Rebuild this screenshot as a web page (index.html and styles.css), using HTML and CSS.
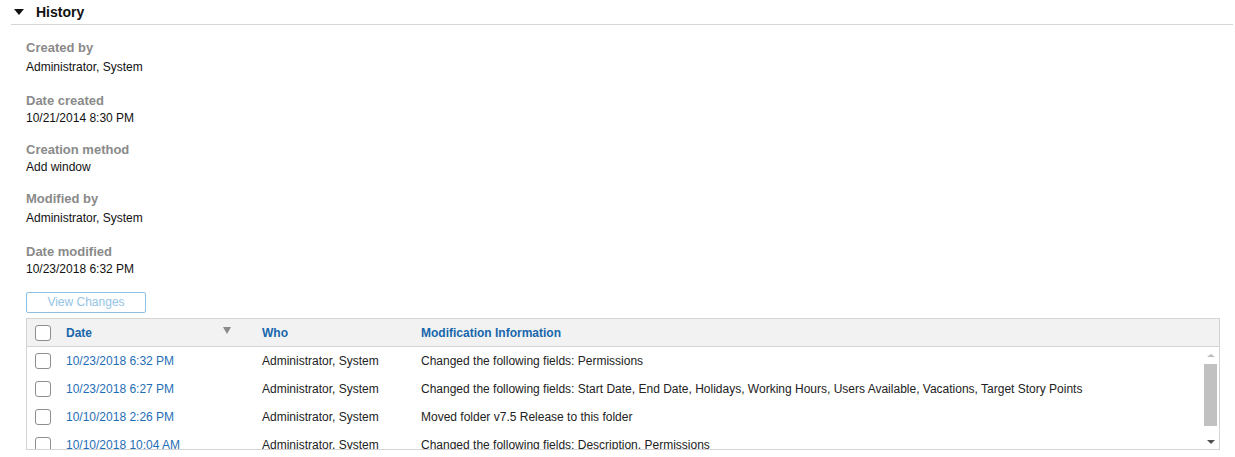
FILE: index.html
```html
<!DOCTYPE html>
<html lang="en">
<head>
<meta charset="utf-8">
<title>History</title>
<link rel="stylesheet" href="styles.css">
</head>
<body>
<section class="history">
  <header class="section-head">
    <span class="caret"></span>
    <h2 class="section-title">History</h2>
  </header>
  <div class="section-body">
    <dl class="fields">
      <div class="field field-tall">
        <dt class="label">Created by</dt>
        <dd class="value">Administrator, System</dd>
      </div>
      <div class="field">
        <dt class="label">Date created</dt>
        <dd class="value">10/21/2014 8:30 PM</dd>
      </div>
      <div class="field">
        <dt class="label">Creation method</dt>
        <dd class="value">Add window</dd>
      </div>
      <div class="field field-tall">
        <dt class="label">Modified by</dt>
        <dd class="value">Administrator, System</dd>
      </div>
      <div class="field">
        <dt class="label">Date modified</dt>
        <dd class="value">10/23/2018 6:32 PM</dd>
      </div>
    </dl>
    <button class="btn" type="button" disabled>View Changes</button>
    <div class="grid">
      <div class="grid-head">
        <div class="cell cell-cb"><span class="cb"></span></div>
        <div class="cell cell-head cell-date"><span>Date</span><span class="sort"></span></div>
        <div class="cell cell-head">Who</div>
        <div class="cell cell-head">Modification Information</div>
      </div>
      <div class="grid-body">
        <div class="rows">
          <div class="row">
            <div class="cell cell-cb"><span class="cb"></span></div>
            <div class="cell link">10/23/2018 6:32 PM</div>
            <div class="cell">Administrator, System</div>
            <div class="cell">Changed the following fields: Permissions</div>
          </div>
          <div class="row">
            <div class="cell cell-cb"><span class="cb"></span></div>
            <div class="cell link">10/23/2018 6:27 PM</div>
            <div class="cell">Administrator, System</div>
            <div class="cell">Changed the following fields: Start Date, End Date, Holidays, Working Hours, Users Available, Vacations, Target Story Points</div>
          </div>
          <div class="row">
            <div class="cell cell-cb"><span class="cb"></span></div>
            <div class="cell link">10/10/2018 2:26 PM</div>
            <div class="cell">Administrator, System</div>
            <div class="cell">Moved folder v7.5 Release to this folder</div>
          </div>
          <div class="row">
            <div class="cell cell-cb"><span class="cb"></span></div>
            <div class="cell link">10/10/2018 10:04 AM</div>
            <div class="cell">Administrator, System</div>
            <div class="cell">Changed the following fields: Description, Permissions</div>
          </div>
        </div>
        <div class="scrollbar">
          <span class="arrow arrow-up"></span>
          <span class="thumb"></span>
          <span class="arrow arrow-down"></span>
        </div>
      </div>
    </div>
  </div>
</section>
</body>
</html>
```

FILE: styles.css
```css
* { box-sizing: border-box; }

body {
  margin: 0;
  background: #fff;
  font-family: "Liberation Sans", Arial, sans-serif;
  font-size: 12px;
  color: #222;
}

.history {
  padding: 0 2px 0 11px;
}

.section-head {
  display: flex;
  align-items: center;
  height: 25px;
  border-bottom: 1px solid #d6d6d6;
  padding-left: 3px;
  padding-bottom: 1px;
}

.caret {
  width: 0;
  height: 0;
  border-left: 5px solid transparent;
  border-right: 5px solid transparent;
  border-top: 6px solid #111;
  margin-right: 12px;
  margin-top: 1px;
}

.section-title {
  margin: 0;
  font-size: 14px;
  font-weight: bold;
  color: #111;
  line-height: 16px;
}

.section-body {
  padding-left: 15px;
  padding-top: 15px;
}

.fields {
  margin: 0;
  display: flex;
  flex-direction: column;
  gap: 16px;
}

.field { display: flex; flex-direction: column; }

.label {
  font-size: 13px;
  font-weight: bold;
  color: #8a8a8a;
  line-height: 16px;
}

.value {
  margin: 1px 0 0 0;
  font-size: 12px;
  color: #111;
  line-height: 16px;
}

.field-tall .value {
  margin-top: 3px;
  margin-bottom: 2px;
}

.btn {
  display: block;
  margin-top: 15px;
  width: 120px;
  height: 21px;
  padding: 0;
  border: 1px solid #8dc0e4;
  border-radius: 2px;
  background: #fff;
  color: #94c4e6;
  font-family: "Liberation Sans", Arial, sans-serif;
  font-size: 12px;
  line-height: 19px;
  text-align: center;
}

.grid {
  margin-top: 5px;
  width: 1194px;
  border: 1px solid #d4d4d4;
}

.grid-head,
.row {
  display: grid;
  grid-template-columns: 31px 196px 159px 1fr;
  align-items: center;
}

.grid-head {
  height: 28px;
  background: #f2f2f2;
  border-bottom: 1px solid #d4d4d4;
}

.cell {
  padding-left: 8px;
  white-space: nowrap;
  overflow: hidden;
  color: #222;
  line-height: 16px;
}

.cell-cb {
  padding-left: 8px;
  display: flex;
  align-items: center;
}

.cb {
  display: block;
  width: 16px;
  height: 16px;
  border: 1px solid #8e8e8e;
  border-radius: 3px;
  background: #fff;
}

.cell-head {
  font-weight: bold;
  color: #1767ad;
}

.cell-date {
  display: flex;
  justify-content: space-between;
  align-items: center;
  padding-right: 23px;
}

.sort {
  width: 0;
  height: 0;
  border-left: 4px solid transparent;
  border-right: 4px solid transparent;
  border-top: 7px solid #8a8a8a;
  margin-top: -4px;
}

.grid-body {
  display: flex;
  height: 102px;
  overflow: hidden;
}

.rows {
  flex: 1;
  min-width: 0;
}

.row {
  height: 28px;
}

.link { color: #1f6eb5; }

.scrollbar {
  width: 17px;
  flex: none;
  display: flex;
  flex-direction: column;
  align-items: center;
  background: #fff;
  padding-top: 7px;
}

.arrow {
  display: block;
  width: 0;
  height: 0;
  border-left: 4px solid transparent;
  border-right: 4px solid transparent;
}

.arrow-up {
  border-bottom: 3px solid #bdbdbd;
}

.arrow-down {
  border-top: 4px solid #505050;
  margin-top: 14px;
}

.thumb {
  display: block;
  width: 13px;
  height: 62px;
  margin-top: 7px;
  background: #c1c1c1;
}
```
